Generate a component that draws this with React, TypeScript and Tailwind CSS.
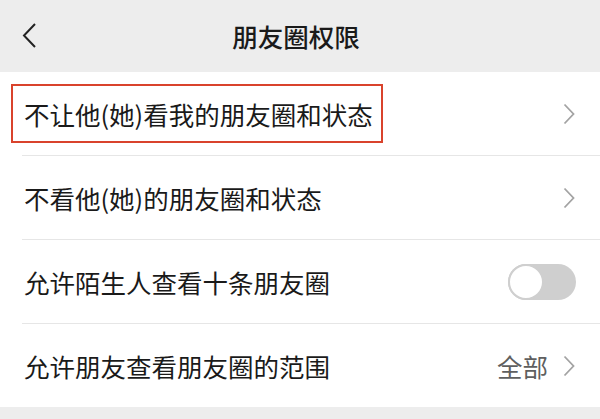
import React from "react";

const font = {
  fontFamily: '"Noto Sans CJK SC", "Noto Sans", sans-serif',
};

const Chevron: React.FC = () => (
  <svg width="14" height="22" viewBox="0 0 14 22" className="shrink-0">
    <path d="M2.5 1.5 L11.5 11 L2.5 20.5" fill="none" stroke="#a3a3a3" strokeWidth="1.8" />
  </svg>
);

const Toggle: React.FC = () => (
  <div className="relative w-[68px] h-[36px] rounded-full bg-[#cfcfcf]">
    <div className="absolute left-0 top-0 w-[36px] h-[36px] rounded-full bg-white border-2 border-[#cfcfcf]" />
  </div>
);

interface RowProps {
  label: string;
  right?: React.ReactNode;
  highlight?: boolean;
}

const Row: React.FC<RowProps> = ({ label, right, highlight }) => (
  <div className="relative flex items-center justify-between h-[83px] pl-[24px] pr-[24px] bg-white">
    <span className="text-[25.5px] text-[#1a1a1a] leading-none">{label}</span>
    {right}
    {highlight && (
      <div className="absolute left-[11px] top-[12px] w-[372px] h-[59px] border-2 border-[#d9432c]" />
    )}
  </div>
);

const Divider: React.FC = () => (
  <div className="bg-white pl-[22px]">
    <div className="h-px bg-[#e6e6e6]" />
  </div>
);

export default function App() {
  return (
    <div style={font} className="w-[600px] h-[419px] bg-[#ededed] overflow-hidden">
      {/* Header */}
      <div className="relative flex items-center justify-center h-[72px] bg-[#ededed]">
        <svg
          width="16"
          height="28"
          viewBox="0 0 16 28"
          className="absolute left-[21px] top-[22px]"
        >
          <path d="M14 2 L3 13.5 L14 25" fill="none" stroke="#222" strokeWidth="2" />
        </svg>
        <span className="text-[25.5px] font-medium text-[#1a1a1a] leading-none pr-[8px]">
          朋友圈权限
        </span>
      </div>

      <Row label="不让他(她)看我的朋友圈和状态" right={<Chevron />} highlight />
      <Divider />
      <Row label="不看他(她)的朋友圈和状态" right={<Chevron />} />
      <Divider />
      <Row label="允许陌生人查看十条朋友圈" right={<Toggle />} />
      <Divider />
      <Row
        label="允许朋友查看朋友圈的范围"
        right={
          <div className="flex items-center gap-[14px]">
            <span className="text-[25.5px] text-[#5f5f5f] leading-none">全部</span>
            <Chevron />
          </div>
        }
      />
    </div>
  );
}
